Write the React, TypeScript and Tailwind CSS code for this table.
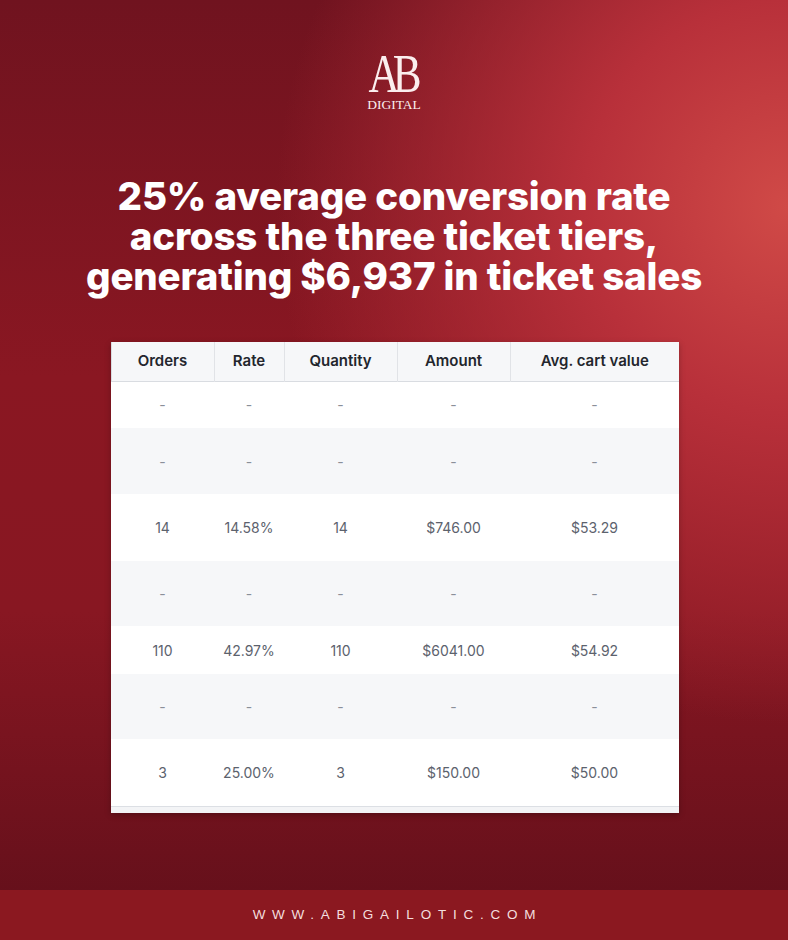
const headers = ['Orders', 'Rate', 'Quantity', 'Amount', 'Avg. cart value']
const widths = ['w-[103px]', 'w-[70px]', 'w-[113px]', 'w-[113px]', 'w-[169px]']

type Row = { cells: string[]; h: string; alt: boolean }

const dash = ['-', '-', '-', '-', '-']

const rows: Row[] = [
  { cells: dash, h: 'h-[47px]', alt: false },
  { cells: dash, h: 'h-[66px]', alt: true },
  { cells: ['14', '14.58%', '14', '$746.00', '$53.29'], h: 'h-[67px]', alt: false },
  { cells: dash, h: 'h-[65px]', alt: true },
  { cells: ['110', '42.97%', '110', '$6041.00', '$54.92'], h: 'h-[48px]', alt: false },
  { cells: dash, h: 'h-[65px]', alt: true },
  { cells: ['3', '25.00%', '3', '$150.00', '$50.00'], h: 'h-[67px]', alt: false }
]

function Logo() {
  return (
    <div className="flex flex-col items-center text-[#fbeeee] [font-family:'Liberation_Serif',serif]">
      <span className="text-[54px] leading-[40px] tracking-[-0.16em] scale-x-80 pr-[6px]">
        AB
      </span>
      <span className="mt-[4px] text-[13.5px] leading-[14px]">DIGITAL</span>
    </div>
  )
}

function StatsTable() {
  return (
    <div className="w-[568px] bg-white shadow-[0_2px_6px_rgba(0,0,0,0.25)] [font-family:Inter,'Liberation_Sans',sans-serif]">
      <table className="w-full table-fixed border-collapse">
        <thead>
          <tr className="h-[39px] bg-[#f6f7f9] border-b border-[#d9dce1]">
            {headers.map((h, i) => (
              <th
                key={h}
                className={`${widths[i]} border-l border-[#e1e3e7] first:border-l-[#d9dce1] text-center text-[15px] font-semibold text-[#23262d]`}
              >
                {h}
              </th>
            ))}
          </tr>
        </thead>
        <tbody>
          {rows.map((r, ri) => (
            <tr key={ri} className={`${r.h} ${r.alt ? 'bg-[#f6f7f9]' : 'bg-white'}`}>
              {r.cells.map((c, ci) => (
                <td
                  key={ci}
                  className={`text-center text-[14px] ${c === '-' ? 'text-[#8a8f99]' : 'text-[#5c626d]'}`}
                >
                  {c}
                </td>
              ))}
            </tr>
          ))}
        </tbody>
      </table>
      <div className="h-[7px] border-t border-[#dcdfe4] bg-[#f3f4f6]" />
    </div>
  )
}

export default function App() {
  return (
    <div className="relative flex h-[940px] w-[788px] flex-col items-center overflow-hidden bg-[radial-gradient(ellipse_65%_55%_at_100%_22%,#d04a47_0%,#b8303a_40%,rgba(160,28,38,0)_100%),linear-gradient(180deg,#70131f_0%,#8a1722_40%,#881722_65%,#66101b_95%)]">
      <div className="pt-[54px]">
        <Logo />
      </div>

      <h1 className="mt-[64px] text-center text-[38.5px] leading-[40px] font-extrabold tracking-[-0.005em] text-white [font-family:Inter,'Liberation_Sans',sans-serif]">
        25% average conversion rate
        <br />
        across the three ticket tiers,
        <br />
        generating $6,937 in ticket sales
      </h1>

      <div className="mt-[46px] pl-[1px]">
        <StatsTable />
      </div>

      <div className="flex-1" />

      <footer className="flex h-[50px] w-full items-center justify-center bg-[#8b1820]">
        <span className="pl-[0.5em] text-[13.5px] tracking-[0.5em] text-[#f3dede] [font-family:'Liberation_Sans',sans-serif]">
          WWW.ABIGAILOTIC.COM
        </span>
      </footer>
    </div>
  )
}
